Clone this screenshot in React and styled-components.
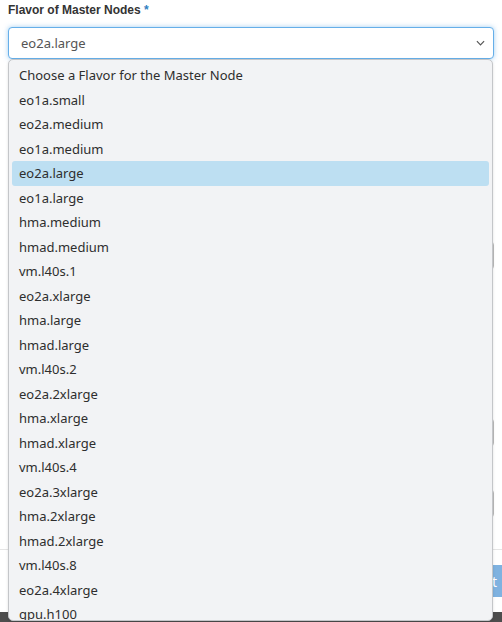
import React from "react";
import styled, { createGlobalStyle } from "styled-components";

const flavors = [
  "eo1a.small",
  "eo2a.medium",
  "eo1a.medium",
  "eo2a.large",
  "eo1a.large",
  "hma.medium",
  "hmad.medium",
  "vm.l40s.1",
  "eo2a.xlarge",
  "hma.large",
  "hmad.large",
  "vm.l40s.2",
  "eo2a.2xlarge",
  "hma.xlarge",
  "hmad.xlarge",
  "vm.l40s.4",
  "eo2a.3xlarge",
  "hma.2xlarge",
  "hmad.2xlarge",
  "vm.l40s.8",
  "eo2a.4xlarge",
  "gpu.h100",
  "gpu.h100x2",
];

const selected = "eo2a.large";

export default function App() {
  return (
    <>
      <GlobalStyle />
      <Page>
        <Form>
          <Field>
            <Label>
              Flavor of Master Nodes <Required>*</Required>
            </Label>
            <SelectWrap>
              <Select>
                <span>{selected}</span>
                <Chevron viewBox="0 0 10 6">
                  <path d="M1 1l4 4 4-4" />
                </Chevron>
              </Select>
              {/* Open options list over the form */}
              <Menu>
                <Option>Choose a Flavor for the Master Node</Option>
                {flavors.map((f) => (
                  <Option key={f} $active={f === selected}>
                    {f}
                  </Option>
                ))}
              </Menu>
            </SelectWrap>
          </Field>
          {/* Fields hidden behind the list */}
          <Input $top={182} />
          <Input $top={148} />
          <Input $top={42} />
        </Form>
        <Footer>
          <Button>Next</Button>
        </Footer>
        <Bottom />
      </Page>
    </>
  );
}

const GlobalStyle = createGlobalStyle`
  html, body {
    margin: 0;
    padding: 0;
    overflow: hidden;
    background: #fff;
  }
`;

const Page = styled.div`
  height: 622px;
  overflow: hidden;
  display: flex;
  flex-direction: column;
  font-family: "Noto Sans", "Open Sans", sans-serif;
`;

const Form = styled.div`
  padding: 0 8px;
  flex: 1;
  display: flex;
  flex-direction: column;
`;

const Field = styled.div`
  display: flex;
  flex-direction: column;
`;

const Label = styled.label`
  font-family: "Liberation Sans", Arial, sans-serif;
  font-weight: bold;
  font-size: 12px;
  color: #333;
  line-height: 14px;
  padding-top: 3px;
  margin-bottom: 10px;
`;

const Required = styled.span`
  color: #2f7fc1;
`;

const SelectWrap = styled.div`
  position: relative;
  z-index: 2;
`;

const Select = styled.div`
  height: 32px;
  box-sizing: border-box;
  border: 1px solid #66afe9;
  border-radius: 4px;
  box-shadow: 0 0 5px rgba(102, 175, 233, 0.6);
  display: flex;
  align-items: center;
  justify-content: space-between;
  padding: 0 8px 0 12px;
  font-size: 13px;
  color: #555;
  background: #fff;
`;

const Chevron = styled.svg`
  width: 9px;
  height: 6px;
  fill: none;
  stroke: #555;
  stroke-width: 1.3;
`;

const Menu = styled.div`
  position: absolute;
  top: 32px;
  left: 0;
  right: 1px;
  height: 562px;
  box-sizing: border-box;
  overflow: hidden;
  background: #f2f3f5;
  border: 1px solid #c4c6c9;
  border-radius: 5px;
  box-shadow: 0 1px 3px rgba(0, 0, 0, 0.12);
  padding: 3px 3px 0;
`;

const Option = styled.div`
  height: 24.5px;
  display: flex;
  align-items: center;
  padding-left: 7px;
  border-radius: 3px;
  font-size: 13px;
  color: #2e2e2e;
  background: ${(p) => (p.$active ? "#bddff2" : "transparent")};
`;

const Input = styled.div`
  margin-top: ${(p) => p.$top}px;
  height: 29px;
  box-sizing: border-box;
  border: 1px solid #bbb;
  border-radius: 4px;
`;

const Footer = styled.div`
  border-top: 1px solid #e5e5e5;
  height: 63px;
  box-sizing: border-box;
  display: flex;
  align-items: center;
  justify-content: flex-end;
  margin-right: -7px;
`;

const Button = styled.div`
  height: 32px;
  padding: 0 12px;
  background: #7fb2e0;
  color: #fff;
  font-size: 14px;
  border-radius: 3px;
  display: flex;
  align-items: center;
  justify-content: center;
`;

const Bottom = styled.div`
  height: 10px;
  background: #4d4d4d;
`;
